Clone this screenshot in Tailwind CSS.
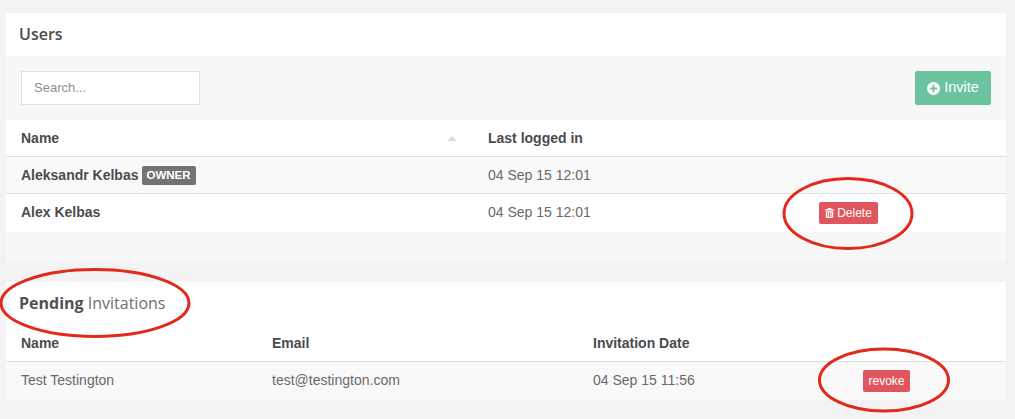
<!DOCTYPE html>
<html lang="en">
<head>
    <meta charset="UTF-8">
    <title>Users</title>
    <script src="https://cdn.jsdelivr.net/npm/@tailwindcss/browser@4"></script>
</head>
<body class="relative h-[419px] w-[1015px] overflow-hidden bg-[#f3f3f3] font-['Liberation_Sans',sans-serif] text-[14px] text-[#676a6c]">

    <div class="pl-[6px] pr-[9px] pt-[13px]">
        <!-- Users panel -->
        <section class="bg-[#f7f7f7]">
            <h2 class="flex h-[43px] items-center bg-white px-[13px] pb-[2px] font-['Open_Sans',sans-serif] text-[16px] font-semibold text-[#4a4c4e]">Users</h2>

            <div class="flex h-[64px] items-center justify-between pl-[15px] pr-[15px]">
                <input type="text" placeholder="Search..." class="h-[34px] w-[179px] border-[1.5px] border-[#e0e1e2] bg-white px-[12px] pb-[2px] text-[13px] placeholder:text-[#8d8f91] outline-none">
                <button class="flex h-[34px] w-[76px] items-center justify-center gap-[4px] rounded-[2px] bg-[#6cc3a0] text-[14.5px] text-white">
                    <svg class="h-[13px] w-[13px]" viewBox="0 0 14 14"><path fill="#fff" fill-rule="evenodd" d="M7 0a7 7 0 1 1 0 14A7 7 0 0 1 7 0zM6 3v3H3v2h3v3h2V8h3V6H8V3z"/></svg>
                    Invite
                </button>
            </div>

            <div class="grid h-[37px] grid-cols-[467px_1fr] items-center border-b border-[#e0e0e0] bg-white pt-[1px] font-bold text-[#4a4c4e]">
                <div class="flex items-center justify-between pl-[15px] pr-[16px]">
                    Name
                    <span class="h-0 w-0 border-x-[5px] border-b-[5px] border-x-transparent border-b-[#dcdcdc]"></span>
                </div>
                <div class="pl-[15px]">Last logged in</div>
            </div>

            <div class="grid h-[37px] grid-cols-[467px_1fr] items-center border-b border-[#e0e0e0] bg-[#f9f9f9]">
                <div class="flex items-center gap-[3px] pl-[15px] font-bold text-[#4a4c4e]">
                    Aleksandr Kelbas
                    <span class="rounded-[2px] bg-[#737373] px-[5px] py-[3px] text-[11.5px] leading-[13px] text-white">OWNER</span>
                </div>
                <div class="pl-[15px]">04 Sep 15 12:01</div>
            </div>

            <div class="grid h-[38px] grid-cols-[467px_331px_1fr] items-center bg-white">
                <div class="pb-[2px] pl-[15px] font-bold text-[#4a4c4e]">Alex Kelbas</div>
                <div class="pb-[2px] pl-[15px]">04 Sep 15 12:01</div>
                <div class="pl-[15px]">
                    <button class="flex h-[22px] w-[59px] items-center justify-center gap-[3px] rounded-[2px] bg-[#e0565f] text-[12px] text-white">
                        <svg class="h-[10px] w-[9px]" viewBox="0 0 11 12"><path fill="#fff" fill-rule="evenodd" d="M3.5 0h4L8 1.5h3V3H0V1.5h3zM1 4h9v7a1 1 0 0 1-1 1H2a1 1 0 0 1-1-1zm2 1v6h1V5zm2 0v6h1V5zm2 0v6h1V5z"/></svg>
                        Delete
                    </button>
                </div>
            </div>

            <div class="h-[30px]"></div>
        </section>

        <!-- Pending invitations panel -->
        <section class="mt-[20px] bg-white">
            <h2 class="flex h-[43px] items-center px-[13px] pb-[2px] font-['Open_Sans',sans-serif] text-[16px] text-[#4f5153]"><span class="font-bold">Pending</span>&nbsp;<span class="text-[16px] font-normal text-[#707070]">Invitations</span></h2>

            <div class="grid h-[37px] grid-cols-[251px_321px_285px_1fr] items-center border-b border-[#e0e0e0] pt-[1px] font-bold text-[#4a4c4e]">
                <div class="pl-[15px]">Name</div>
                <div class="pl-[15px]">Email</div>
                <div class="pl-[15px]">Invitation Date</div>
                <div></div>
            </div>

            <div class="grid h-[38px] grid-cols-[251px_321px_285px_1fr] items-center bg-[#f9f9f9]">
                <div class="pb-[2px] pl-[15px]">Test Testington</div>
                <div class="pb-[2px] pl-[15px]">test@testington.com</div>
                <div class="pb-[2px] pl-[15px]">04 Sep 15 11:56</div>
                <div>
                    <button class="h-[22px] w-[47px] rounded-[2px] bg-[#e0565f] text-[12px] text-white">revoke</button>
                </div>
            </div>
        </section>
    </div>

    <!-- Hand drawn annotations over the screenshot -->
    <svg class="pointer-events-none absolute inset-0" width="1015" height="419" fill="none" stroke="#e2291a" stroke-width="3">
        <ellipse cx="848" cy="213.5" rx="64" ry="35"/>
        <ellipse cx="95" cy="303" rx="94" ry="33.5"/>
        <ellipse cx="884" cy="380" rx="64.5" ry="31"/>
    </svg>
</body>
</html>
